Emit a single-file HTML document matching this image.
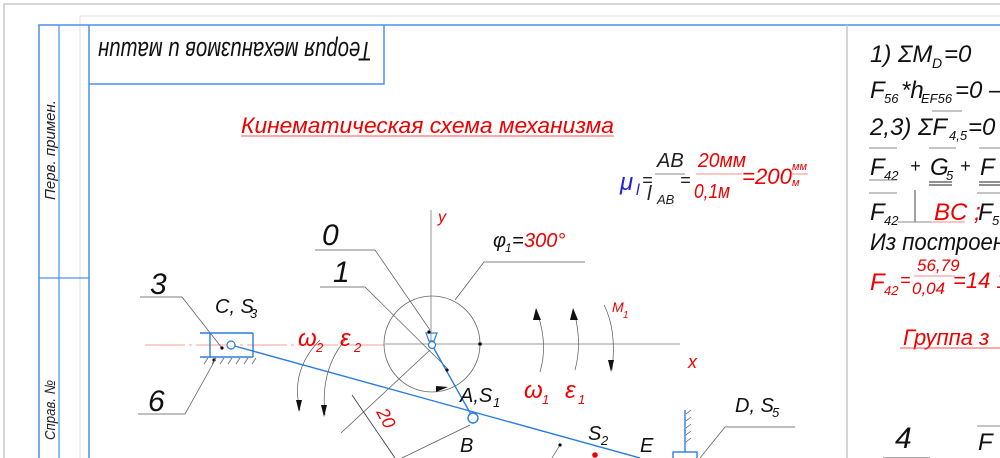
<!DOCTYPE html>
<html><head><meta charset="utf-8"><style>
html,body{margin:0;padding:0;background:#fff;width:1000px;height:458px;overflow:hidden}
svg{display:block}
text{font-family:"Liberation Sans",sans-serif;font-style:italic}
</style></head><body>
<svg width="1000" height="458" viewBox="0 0 1000 458" xmlns="http://www.w3.org/2000/svg">
<path d="M4 458V4H1000" fill="none" stroke="#c8c8c8" stroke-width="1.5"/>
<path d="M80 458V16H1000" fill="none" stroke="#e0e0e0" stroke-width="1"/>
<path d="M39 458V25H1000" fill="none" stroke="#4a90f0" stroke-width="1.5"/>
<line x1="59" y1="25" x2="59" y2="458" stroke="#4a90f0" stroke-width="1.2"/>
<line x1="89" y1="25" x2="89" y2="458" stroke="#4a90f0" stroke-width="1.5"/>
<line x1="39" y1="278" x2="89" y2="278" stroke="#4a90f0" stroke-width="1.2"/>
<path d="M89 84H384V25" fill="none" stroke="#4a90f0" stroke-width="1.5"/>
<line x1="847" y1="25" x2="847" y2="458" stroke="#c8c8c8" stroke-width="1.5"/>
<text transform="translate(55,200) rotate(-90)" font-size="15" fill="#222" textLength="100" lengthAdjust="spacingAndGlyphs">Перв. примен.</text>
<text transform="translate(55,440) rotate(-90)" font-size="15" fill="#222" textLength="60" lengthAdjust="spacingAndGlyphs">Справ. №</text>
<text transform="translate(372,42) rotate(180)" font-size="27" fill="#111" textLength="274" lengthAdjust="spacingAndGlyphs">Теория механизмов и машин</text>
<text x="241" y="133" font-size="22" fill="#e00" textLength="373" lengthAdjust="spacingAndGlyphs">Кинематическая схема механизма</text>
<line x1="241" y1="136" x2="614" y2="136" stroke="#f55" stroke-width="1"/>
<text x="620" y="190" font-size="24" fill="#22d">μ</text>
<text x="636" y="195" font-size="16" fill="#22d">l</text>
<text x="642" y="186" font-size="18" fill="#222">=</text>
<text x="657" y="167" font-size="20" fill="#222">AB</text>
<line x1="655" y1="174" x2="685" y2="174" stroke="#888"/>
<text x="647" y="200" font-size="20" fill="#222">l</text><text x="657" y="204" font-size="13" fill="#222">AB</text>
<text x="680" y="186" font-size="18" fill="#222">=</text>
<text x="698" y="167" font-size="20" fill="#e00" textLength="48" lengthAdjust="spacingAndGlyphs">20мм</text>
<line x1="696" y1="174" x2="742" y2="174" stroke="#f88"/>
<text x="694" y="198" font-size="20" fill="#e00" textLength="36" lengthAdjust="spacingAndGlyphs">0,1м</text>
<text x="742" y="184" font-size="22" fill="#e00" textLength="50" lengthAdjust="spacingAndGlyphs">=200</text>
<text x="792" y="170" font-size="11" fill="#e00">мм</text>
<line x1="791" y1="174" x2="808" y2="174" stroke="#f88"/>
<text x="792" y="186" font-size="11" fill="#e00">м</text>
<line x1="145" y1="345" x2="385" y2="345" stroke="#f8a090" stroke-width="1" stroke-dasharray="40,4,3,4"/>
<line x1="385" y1="344" x2="680" y2="344" stroke="#999" stroke-width="1"/>
<line x1="431" y1="210" x2="431" y2="344" stroke="#999" stroke-width="1"/>
<text x="438" y="222" font-size="16" fill="#e00">y</text>
<text x="688" y="368" font-size="18" fill="#e00">x</text>
<circle cx="432" cy="344" r="48" fill="none" stroke="#666" stroke-width="0.8"/>
<circle cx="480" cy="344" r="1.8" fill="#000"/>
<path d="M315 250H375L430 330" fill="none" stroke="#555" stroke-width="0.7"/>
<path d="M320 287H365L447 368" fill="none" stroke="#555" stroke-width="0.7"/>
<path d="M585 262H484L455 300" fill="none" stroke="#555" stroke-width="0.7"/>
<path d="M140 297H182L222 348" fill="none" stroke="#555" stroke-width="0.7"/>
<path d="M138 414H185L214 362" fill="none" stroke="#555" stroke-width="0.7"/>
<path d="M341 433L430 350" fill="none" stroke="#555" stroke-width="0.7"/>
<path d="M352 395L395 458" fill="none" stroke="#333" stroke-width="0.8"/>
<path d="M402 458L470 425" fill="none" stroke="#555" stroke-width="0.7"/>
<path d="M795 427H725L700 458" fill="none" stroke="#555" stroke-width="0.7"/>
<path d="M560 445L552 458" fill="none" stroke="#555" stroke-width="0.7"/>
<path d="M300 410Q290 370 320 340" fill="none" stroke="#555" stroke-width="0.7"/>
<path d="M296 400l3 12 3-12z" fill="#111"/>
<path d="M325 415Q320 370 345 340" fill="none" stroke="#555" stroke-width="0.7"/>
<path d="M321 405l3 12 3-12z" fill="#111"/>
<path d="M540 372Q548 345 538 315" fill="none" stroke="#555" stroke-width="0.7"/>
<path d="M533 320l3-12 5 12z" fill="#111"/>
<path d="M575 370Q582 345 575 315" fill="none" stroke="#555" stroke-width="0.7"/>
<path d="M570 320l3-12 5 12z" fill="#111"/>
<path d="M604 305Q617 330 612 370" fill="none" stroke="#555" stroke-width="0.7"/>
<path d="M608 360l3 12 3-12z" fill="#111"/>
<path d="M436 386l12 1-12 5z" fill="#111"/>
<line x1="231" y1="345" x2="640" y2="458" stroke="#2a7de0" stroke-width="1.4"/>
<line x1="432" y1="345" x2="473" y2="418" stroke="#2a7de0" stroke-width="1.4"/>
<circle cx="432" cy="345" r="3.5" fill="#fff" stroke="#2a7de0" stroke-width="1.2"/>
<path d="M426 333h11l-3 8h-5z" fill="none" stroke="#2a7de0" stroke-width="1.2"/>
<circle cx="429" cy="332" r="1.6" fill="#000"/>
<circle cx="473" cy="418" r="5" fill="#fff" stroke="#2a7de0" stroke-width="1.4"/>
<circle cx="447" cy="370" r="1.6" fill="#000"/>
<circle cx="560" cy="445" r="1.6" fill="#000"/>
<circle cx="595" cy="455" r="2.8" fill="#e00"/>
<path d="M200 333H253M200 357H253M210 333V357M253 333V357" stroke="#2a7de0" stroke-width="1.4" fill="none"/>
<circle cx="231" cy="345" r="4" fill="#fff" stroke="#2a7de0" stroke-width="1.2"/>
<circle cx="222" cy="348" r="1.6" fill="#000"/>
<circle cx="214" cy="360" r="1.6" fill="#000"/>
<path d="M204 364l4-6M212 364l4-6M220 364l4-6M228 364l4-6M236 364l4-6M244 364l4-6M252 364l4-6" stroke="#555" stroke-width="0.7"/>
<line x1="685" y1="410" x2="685" y2="452" stroke="#2a7de0" stroke-width="1.4"/>
<path d="M686 414l5-4M686 421l5-4M686 428l5-4M686 435l5-4M686 442l5-4" stroke="#555" stroke-width="0.7"/>
<rect x="673" y="452" width="24" height="10" fill="none" stroke="#2a7de0" stroke-width="1.4"/>
<g fill="#111">
<text x="150" y="294" font-size="30">3</text>
<text x="148" y="411" font-size="30">6</text>
<text x="215" y="313" font-size="20">C, S</text><text x="250" y="318" font-size="13">3</text>
<text x="322" y="245" font-size="30">0</text>
<text x="333" y="282" font-size="30">1</text>
<text x="493" y="247" font-size="20">φ</text><text x="505" y="252" font-size="12">1</text><text x="512" y="247" font-size="20">=</text>
<text x="460" y="402" font-size="20">A,S</text><text x="493" y="407" font-size="13">1</text>
<text x="460" y="452" font-size="20">B</text>
<text x="588" y="440" font-size="20">S</text><text x="601" y="445" font-size="13">2</text>
<text x="640" y="452" font-size="20">E</text>
<text x="735" y="412" font-size="20">D, S</text><text x="772" y="417" font-size="13">5</text>
</g>
<g fill="#e00">
<text x="524" y="247" font-size="20">300°</text>
<text x="298" y="346" font-size="24">ω</text><text x="316" y="352" font-size="13">2</text>
<text x="340" y="346" font-size="24">ε</text><text x="354" y="352" font-size="13">2</text>
<text x="524" y="398" font-size="24">ω</text><text x="542" y="404" font-size="13">1</text>
<text x="565" y="398" font-size="24">ε</text><text x="578" y="404" font-size="13">1</text>
<text x="612" y="312" font-size="14">M</text><text x="623" y="318" font-size="10">1</text>
<text transform="translate(376,412) rotate(62)" font-size="18">20</text>
</g>
<g fill="#111">
<text x="870" y="62" font-size="24">1) ΣM</text><text x="932" y="68" font-size="14">D</text><text x="944" y="62" font-size="24">=0</text>
<text x="870" y="98" font-size="24">F</text><text x="884" y="103" font-size="13">56</text><text x="901" y="98" font-size="24">*h</text><text x="921" y="103" font-size="13">EF56</text><text x="955" y="98" font-size="24">=0 –</text>
<text x="870" y="135" font-size="24">2,3) ΣF</text><text x="949" y="140" font-size="13">4,5</text><text x="968" y="135" font-size="24"> =0</text>
<line x1="932" y1="111" x2="962" y2="111" stroke="#888"/>
<text x="870" y="175" font-size="24">F</text><text x="884" y="180" font-size="13">42</text>
<text x="910" y="172" font-size="18">+</text>
<text x="930" y="175" font-size="24">G</text><text x="946" y="180" font-size="13">5</text>
<text x="960" y="172" font-size="18">+</text>
<text x="980" y="175" font-size="24">F</text>
<line x1="869" y1="148" x2="897" y2="148" stroke="#888"/>
<line x1="869" y1="180" x2="897" y2="180" stroke="#888"/>
<line x1="929" y1="148" x2="956" y2="148" stroke="#888"/>
<line x1="929" y1="182" x2="952" y2="182" stroke="#222"/><line x1="929" y1="185" x2="952" y2="185" stroke="#222"/>
<line x1="979" y1="148" x2="1000" y2="148" stroke="#888"/>
<line x1="979" y1="182" x2="1000" y2="182" stroke="#222"/><line x1="979" y1="185" x2="1000" y2="185" stroke="#222"/>
<text x="870" y="220" font-size="24">F</text><text x="884" y="225" font-size="13">42</text>
<line x1="869" y1="193" x2="897" y2="193" stroke="#888"/>
<line x1="915" y1="190" x2="915" y2="222" stroke="#444"/>
<line x1="898" y1="222" x2="931" y2="222" stroke="#888"/>
<text x="978" y="220" font-size="24">F</text><text x="992" y="225" font-size="13">56</text>
<line x1="977" y1="193" x2="1000" y2="193" stroke="#888"/>
<text x="870" y="250" font-size="24" textLength="135" lengthAdjust="spacingAndGlyphs">Из построен</text>
<text x="895" y="448" font-size="30">4</text>
<line x1="883" y1="458" x2="930" y2="458" stroke="#555"/>
<text x="978" y="450" font-size="24">F</text>
<line x1="977" y1="426" x2="1000" y2="426" stroke="#888"/>
</g>
<g fill="#e00">
<text x="934" y="220" font-size="24">BC ;</text>
<line x1="931" y1="222" x2="965" y2="222" stroke="#f88"/>
<text x="870" y="290" font-size="24">F</text><text x="884" y="295" font-size="13">42</text><text x="900" y="286" font-size="18">=</text>
<text x="917" y="271" font-size="17">56,79</text>
<line x1="914" y1="276" x2="955" y2="276" stroke="#f88"/>
<text x="912" y="294" font-size="17">0,04</text>
<text x="953" y="288" font-size="22">=14 19</text>
<text x="903" y="345" font-size="22">Группа з</text>
<line x1="900" y1="348" x2="1000" y2="348" stroke="#f55"/>
</g>
</svg>
</body></html>
